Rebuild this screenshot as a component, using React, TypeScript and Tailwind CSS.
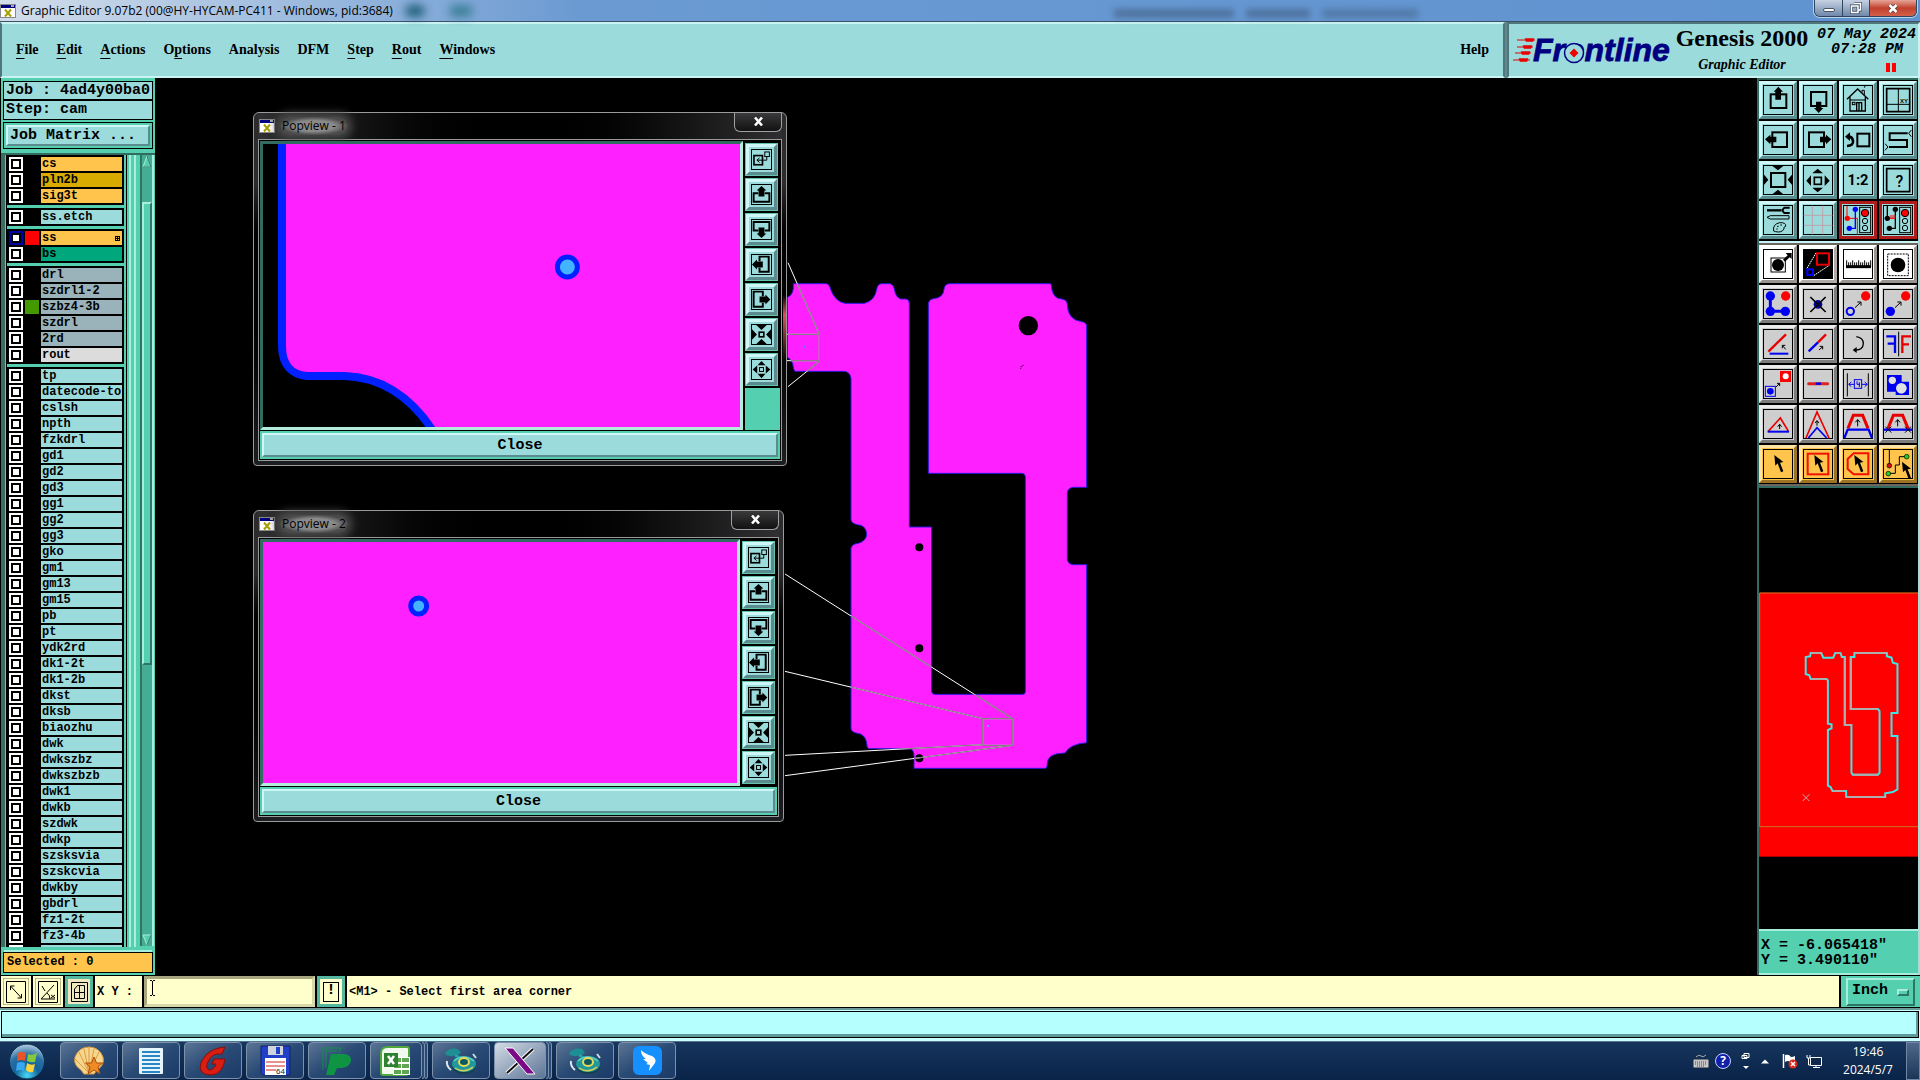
import type { ReactNode } from 'react';

const MONO = 'font-["Liberation_Mono",monospace] font-bold';
const SERIF = 'font-["Liberation_Serif",serif] font-bold';
const SANS = 'font-["Open_Sans",sans-serif]';

const RAISED = 'border-t-[#cff7f7] border-l-[#cff7f7] border-b-[#5a8b8e] border-r-[#5a8b8e]';
const RAISED_TEAL = 'border-t-[#a8eedc] border-l-[#a8eedc] border-b-[#2f7566] border-r-[#2f7566]';

const MENUS: { label: string; key: number }[] = [
  { label: 'File', key: 0 },
  { label: 'Edit', key: 0 },
  { label: 'Actions', key: 0 },
  { label: 'Options', key: 1 },
  { label: 'Analysis', key: -1 },
  { label: 'DFM', key: -1 },
  { label: 'Step', key: 0 },
  { label: 'Rout', key: 0 },
  { label: 'Windows', key: 0 },
];

interface Layer {
  name: string;
  color?: string;
  swatch?: string;
  active?: boolean;
}

const BOARD = 'bg-[#ffc44c]';
const DRILL = 'bg-[#9ab3bb]';

const LAYER_GROUPS: Layer[][] = [
  [
    { name: 'cs', color: BOARD },
    { name: 'pln2b', color: 'bg-[#d9aa00]' },
    { name: 'sig3t', color: BOARD },
  ],
  [{ name: 'ss.etch' }],
  [
    { name: 'ss', color: BOARD, swatch: 'bg-[#ff0000]', active: true },
    { name: 'bs', color: 'bg-[#00a67c]' },
  ],
  [
    { name: 'drl', color: DRILL },
    { name: 'szdrl1-2', color: DRILL },
    { name: 'szbz4-3b', color: DRILL, swatch: 'bg-[#429a00]' },
    { name: 'szdrl', color: DRILL },
    { name: '2rd', color: DRILL },
    { name: 'rout', color: 'bg-[#dcdcdc]' },
  ],
  [
    'tp', 'datecode-to', 'cslsh', 'npth', 'fzkdrl', 'gd1', 'gd2', 'gd3', 'gg1', 'gg2', 'gg3', 'gko',
    'gm1', 'gm13', 'gm15', 'pb', 'pt', 'ydk2rd', 'dk1-2t', 'dk1-2b', 'dkst', 'dksb', 'biaozhu', 'dwk',
    'dwkszbz', 'dwkszbzb', 'dwk1', 'dwkb', 'szdwk', 'dwkp', 'szsksvia', 'szskcvia', 'dwkby', 'gbdrl',
    'fz1-2t', 'fz3-4b', '',
  ].map((name) => ({ name })),
];

const BOARD_PATH =
  'M40 41H140Q150 44 152 58Q165 95 195 100H253Q285 92 290 58Q292 42 305 41H330Q342 44 344 62Q348 82 362 87H378Q388 88 388 100V771H455V1265Q457 1273 465 1273H728Q736 1273 736 1265V620Q735 610 725 610H445V100Q447 88 460 86Q490 84 492 58Q494 42 508 41H812Q815 45 816 60Q822 86 845 87Q862 89 862 105Q864 150 905 155Q920 157 920 170V652H880Q862 654 862 670V868Q864 883 880 884H920V1418Q870 1422 855 1449Q802 1450 802 1480Q802 1495 795 1495H402V1455Q400 1436 388 1436H266Q260 1432 260 1418Q255 1392 232 1390Q213 1386 213 1375V835Q216 822 235 820Q260 812 260 792Q258 765 232 764Q213 760 213 748V325Q210 304 190 304H45Q40 300 38 280Q30 265 22 262V82Q38 76 40 55Z';

const LEADERS =
  'M24 -22L118 193M24 350L118 274M0 193H118V272H0M15 912L698 1346M15 1204L608 1346M15 1456L608 1424M15 1517L698 1426M608 1346H698V1426H608Z';

function AppIcon() {
  return (
    <svg width="16" height="14" viewBox="0 0 16 14" className="shrink-0" aria-hidden="true">
      <rect x="0.5" y="0.5" width="15" height="13" fill="#fff" stroke="#888" />
      <rect x="1" y="1" width="14" height="3" fill="#000080" />
      <rect x="11" y="1" width="3" height="2" fill="#aaa" />
      <path d="M5 5.500l6 7M11 5.500l-6 7" stroke="#a8a000" strokeWidth="2" />
    </svg>
  );
}

function TitleBar() {
  return (
    <header className="flex h-[22px] shrink-0 justify-between border-b border-[#3d5068] bg-linear-to-r from-[#d3deea] via-[#6b9ad2] via-30% to-[#5f93d0]">
      <div className="flex items-center">
        <AppIcon />
        <h1 className={`${SANS} ml-[5px] text-[12px] text-black`}>
          Graphic Editor 9.07b2 (00@HY-HYCAM-PC411 - Windows, pid:3684)
        </h1>
        <div className="ml-3 flex gap-6 blur-[5px]">
          <span className="h-3 w-5 rounded-full bg-[#1f5f78]" />
          <span className="h-3 w-6 rounded-full bg-[#3b7f98]" />
        </div>
      </div>
      <div className="mt-[9px] mr-40 ml-auto flex w-[540px] gap-3 blur-[3px]">
        <span className="h-[9px] w-[120px] bg-[#38506e]/50" />
        <span className="h-[9px] w-16 bg-[#38506e]/50" />
        <span className="h-[9px] w-24 bg-[#38506e]/40" />
      </div>
      <div className="mr-[3px] flex h-[17px] w-[103px] shrink-0 overflow-hidden rounded-b-md border border-t-0 border-[#31465e] shadow-[0_0_0_1px_#b9d2ea]">
        <button aria-label="Minimize" className="flex w-7 items-center justify-center border-r border-[#31465e] bg-linear-to-b from-[#c6d2e2] to-[#7088aa]">
          <span className="mt-1 h-[4px] w-3 rounded-xs border border-[#4a5568] bg-white" />
        </button>
        <button aria-label="Restore" className="flex w-[27px] items-center justify-center border-r border-[#31465e] bg-linear-to-b from-[#c6d2e2] to-[#7088aa]">
          <svg width="12" height="12" viewBox="0 0 12 12">
            <path d="M4 1.500h6.500v6.500h-2.500M1.500 4h6.500v6.500h-6.500z" fill="none" stroke="#445066" strokeWidth="3" />
            <path d="M4 1.500h6.500v6.500h-2.500M1.500 4h6.500v6.500h-6.500z" fill="none" stroke="#fff" strokeWidth="1.500" />
          </svg>
        </button>
        <button aria-label="Close" className="flex grow items-center justify-center bg-linear-to-b from-[#e6a498] via-[#c0402c] via-50% to-[#d4604a]">
          <svg width="10" height="9" viewBox="0 0 10 9">
            <path d="M1.500 1l7 7M8.500 1l-7 7" stroke="#5c4040" strokeWidth="4" />
            <path d="M1.500 1l7 7M8.500 1l-7 7" stroke="#fff" strokeWidth="2.500" />
          </svg>
        </button>
      </div>
    </header>
  );
}

function MenuLabel({ label, index }: { label: string; index: number }) {
  if (index < 0) return <>{label}</>;
  return (
    <>
      {label.slice(0, index)}
      <span className="underline decoration-1 underline-offset-4">{label[index]}</span>
      {label.slice(index + 1)}
    </>
  );
}

function FrontlineLogo() {
  return (
    <svg width="162" height="34" viewBox="0 0 162 34" role="img" aria-label="Frontline">
      <g stroke="#e80000" fill="#e80000">
        <path d="M4 7h18M4 14h16M2 20h16M-1 27h18" strokeWidth="1" />
        <path d="M12 5.500h9l-1 3h-7zM10 12.500h9l-1 3h-7zM8 18.500h9l-1 3h-7zM6 25.500h9l-1 3h-7z" strokeWidth="0.500" />
      </g>
      <text
        x="20"
        y="28"
        fontSize="32"
        fill="#000080"
        stroke="#000080"
        strokeWidth="0.800"
        className="font-['Liberation_Sans',sans-serif] font-bold italic"
      >
        Frontline
      </text>
      <ellipse cx="61" cy="20" rx="9.500" ry="9.500" fill="#9cdbdc" stroke="#000080" strokeWidth="1.500" />
      <path d="M61 15.500l4.500 4.500l-4.500 4.500l-4.500 -4.500z" fill="#f00000" />
    </svg>
  );
}

function MenuBar() {
  return (
    <div className="flex h-14 shrink-0 bg-[#5f8a90]">
      <nav className={`${SERIF} flex grow items-center gap-[18px] border-2 border-t-[#c8f4f4] border-r-[#4f777b] border-b-[#c8f4f4] border-l-[#4f777b] bg-[#9cdbdc] pr-[14px] pb-[2px] pl-[14px] text-[14px] text-black`}>
        {MENUS.map((m) => (
          <button key={m.label}>
            <MenuLabel label={m.label} index={m.key} />
          </button>
        ))}
        <button className="ml-auto">Help</button>
      </nav>
      <div className="ml-[2px] flex w-[413px] shrink-0 border-2 border-t-[#4f777b] border-r-[#c8f4f4] border-b-[#c8f4f4] border-l-[#4f777b] bg-[#9cdbdc] text-black">
        <div className="mt-[9px] ml-1 w-[160px]">
          <FrontlineLogo />
        </div>
        <div className={`${SERIF} flex w-[138px] flex-col items-center whitespace-nowrap`}>
          <span className="text-[24px] leading-7">Genesis 2000</span>
          <span className="mt-[5px] text-[14px] leading-4 italic">Graphic Editor</span>
        </div>
        <div className={`${MONO} mt-[3px] flex grow flex-col items-end pr-[2px] text-[15px] leading-[15px] whitespace-nowrap italic`}>
          <span>07 May 2024</span>
          <span className="mr-[13px]">07:28 PM</span>
          <span className="mt-[6px] mr-5 flex gap-[2px]">
            <span className="h-[9px] w-1 bg-[#ff0000]" />
            <span className="h-[9px] w-1 bg-[#ff0000]" />
          </span>
        </div>
      </div>
    </div>
  );
}

function LayerRow({ layer }: { layer: Layer }) {
  return (
    <label className="flex h-4 items-center gap-[2px]">
      <input
        type="checkbox"
        aria-label={layer.name || 'layer'}
        className={`h-[14px] w-[14px] shrink-0 appearance-none border-2 bg-white shadow-[inset_0_0_0_2px_#000] ${layer.active ? 'border-[#0000a8]' : 'border-white'}`}
      />
      <span className={`h-[14px] w-[14px] shrink-0 ${layer.swatch ?? 'bg-black'}`} />
      <span className={`flex h-[14px] w-[81px] items-center overflow-hidden pl-px text-[12px] leading-[14px] ${layer.color ?? 'bg-[#9cdbdc]'}`}>
        {layer.name}
        {layer.active && (
          <svg width="5" height="5" viewBox="0 0 5 5" className="mr-[2px] ml-auto" aria-hidden="true">
            <path d="M0 .5h5M0 2.500h5M0 4.500h5M.5 0v5M2.500 0v5M4.500 0v5" stroke="#000" />
          </svg>
        )}
      </span>
    </label>
  );
}

function Sidebar() {
  return (
    <aside className={`${MONO} flex w-[155px] shrink-0 flex-col border-l border-black bg-[#54cfb0] pt-[3px] text-[15px] text-black`}>
      <div className="mr-[2px] ml-[2px] leading-[18px] whitespace-pre">
        <div className="h-[19px] border border-black bg-[#9cdbdc] px-[2px]">Job : 4ad4y00ba0</div>
        <div className="h-5 border border-black bg-[#9cdbdc] px-[2px]">Step: cam</div>
        <div className="mt-[2px] border border-black p-[2px]">
          <button className={`block h-[21px] w-full border-2 bg-[#9cdbdc] pl-[2px] text-left leading-[17px] ${RAISED}`}>Job Matrix ...</button>
        </div>
      </div>
      <div className="mt-[4px] flex min-h-0 grow border-t-2 border-[#336b60]">
        <div className="w-[4px] shrink-0 bg-[#3b6d62]" />
        <div className="ml-px flex min-h-0 w-[121px] flex-col gap-[3px] overflow-hidden border-x border-black pr-[2px]">
          {LAYER_GROUPS.map((group) => (
            <div key={group[0].name} className="shrink-0 bg-black py-px pl-[2px]">
              {group.map((layer) => (
                <LayerRow key={layer.name} layer={layer} />
              ))}
            </div>
          ))}
        </div>
        <div className="ml-[2px] w-[2px] bg-[#a8eedc]" />
        <div className="ml-[3px] w-[2px] bg-[#a8eedc]" />
        <div className="mb-px ml-[4px] flex w-[14px] flex-col items-center border-x-2 border-r-[#a8eedc] border-l-[#2f7566] bg-[#44ad94]">
          <svg width="10" height="13" viewBox="0 0 10 13" className="mb-[34px] shrink-0">
            <path d="M5 1l4 11h-8z" fill="#54cfb0" stroke="#a8eedc" />
            <path d="M5 1l4 11h-8" fill="none" stroke="#2f7566" />
          </svg>
          <div className={`h-[463px] w-[10px] border-2 bg-[#54cfb0] ${RAISED_TEAL}`} />
          <svg width="10" height="12" viewBox="0 0 10 12" className="mt-auto shrink-0">
            <path d="M1 1h8l-4 10z" fill="#54cfb0" stroke="#a8eedc" />
            <path d="M9 1l-4 10" stroke="#2f7566" />
          </svg>
        </div>
      </div>
      <div className="mx-[2px] mt-[5px] mb-[2px] h-[21px] border border-black bg-[#ffc44c] pl-[3px] text-[12px] leading-[18px] whitespace-pre shadow-[0_-3px_0_-1px_#a8eedc]">
        Selected : 0
      </div>
    </aside>
  );
}

// Icons below are drawn on a grid of three units to the pixel.
function UpArrow() {
  return (
    <>
      <rect x="35" y="40" width="47" height="41" fill="none" stroke="#000" strokeWidth="6" />
      <path d="M58 17l14 15h-6v24h-17v-24h-5z" />
    </>
  );
}

function Cursor({ at }: { at?: string }) {
  return <path transform={at} d="M46 30l3 32l7 -7l10 27l7 -3l-10 -26l10 -2z" />;
}

const TRAFFIC = (
  <g fill="none" stroke="#000" strokeWidth="3">
    <rect x="62" y="19" width="33" height="76" />
    <circle cx="78" cy="36" r="11" fill="#f00" />
    <circle cx="78" cy="60" r="8" />
    <circle cx="78" cy="81" r="8" />
  </g>
);

const VIEW_TOOLS: { name: string; alert?: boolean; art: ReactNode }[] = [
  { name: 'Pan up', art: <UpArrow /> },
  {
    name: 'Pan down',
    art: (
      <>
        <rect x="36" y="33" width="46" height="42" fill="none" stroke="#000" strokeWidth="6" />
        <path d="M59 96l14 -15h-6v-19h-16v19h-6z" />
      </>
    ),
  },
  {
    name: 'Home',
    art: (
      <g fill="none" stroke="#000" strokeWidth="4">
        <path d="M24 55L56 24L88 55M33 49V90H79V49M53 90V65H68V90M60 66V90" />
        <path d="M69 35V28H76V42M76 20l3 -7M33 57H79" strokeWidth="3" />
        <rect x="40" y="64" width="8" height="7" strokeWidth="3" />
      </g>
    ),
  },
  {
    name: 'Panes',
    art: (
      <>
        <path d="M23 23H92V92H23Z" fill="none" stroke="#000" strokeWidth="5" />
        <path d="M58 23V92M23 70H92" stroke="#000" strokeWidth="3" />
        <text x="63" y="66" fontSize="18" className="font-['Liberation_Sans',sans-serif] font-bold">
          XY
        </text>
      </>
    ),
  },
  {
    name: 'Pan left',
    art: (
      <>
        <rect x="40" y="34" width="44" height="44" fill="none" stroke="#000" strokeWidth="6" />
        <path d="M18 55l16 -14v6h18v17h-18v6z" />
      </>
    ),
  },
  {
    name: 'Pan right',
    art: (
      <>
        <rect x="30" y="34" width="45" height="44" fill="none" stroke="#000" strokeWidth="6" />
        <path d="M97 55l-16 -14v6h-18v17h18v6z" />
      </>
    ),
  },
  {
    name: 'Previous view',
    art: (
      <>
        <rect x="55" y="38" width="36" height="38" fill="none" stroke="#000" strokeWidth="6" />
        <path d="M24 75Q44 74 42 60Q40 47 28 47" fill="none" stroke="#000" strokeWidth="8" />
        <path d="M18 47l15 -13v26z" />
      </>
    ),
  },
  {
    name: 'Serpentine',
    art: (
      <g fill="none" stroke="#000">
        <path d="M86 37H32V57H84V78H30" strokeWidth="6" />
        <path d="M97 27l-8 10l8 10M18 68l9 10l-9 10" strokeWidth="3" />
      </g>
    ),
  },
  {
    name: 'Zoom in',
    art: (
      <>
        <rect x="36" y="36" width="43" height="42" fill="none" stroke="#000" strokeWidth="6" />
        <path d="M40 15H73L57 28ZM40 100H73L57 86ZM14 40V73L28 56ZM100 40V73L86 56Z" />
      </>
    ),
  },
  {
    name: 'Zoom out',
    art: (
      <>
        <rect x="46" y="49" width="21" height="21" fill="none" stroke="#000" strokeWidth="5" />
        <path d="M40 37H72L56 23ZM40 80H72L56 94ZM36 43V75L22 59ZM77 43V75L92 59Z" />
      </>
    ),
  },
  {
    name: 'Zoom 1:2',
    art: (
      <text x="57" y="73" fontSize="44" textAnchor="middle" className="font-['Roboto',sans-serif] font-bold">
        1:2
      </text>
    ),
  },
  {
    name: 'Help',
    art: (
      <>
        <path d="M23 23H92V92H23Z" fill="none" stroke="#000" strokeWidth="5" />
        <text x="61" y="78" fontSize="48" textAnchor="middle" className="font-['Roboto',sans-serif] font-medium">
          ?
        </text>
      </>
    ),
  },
  {
    name: 'Setup',
    art: (
      <g fill="none" stroke="#000">
        <path d="M24 28H68" strokeWidth="7" />
        <path d="M92 20H76Q66 28 76 36H92" strokeWidth="6" />
        <path d="M24 49l10 -5H90V54H34Z" strokeWidth="3" />
        <path d="M44 90Q40 70 62 65Q82 64 80 76Q72 78 75 84Q68 96 50 92ZM54 76h5M64 72h5M52 84h4" strokeWidth="3" />
      </g>
    ),
  },
  {
    name: 'Grid',
    art: <path d="M40 14V100M71 14V100M14 43H100M14 73H100" stroke="#bfa3ac" strokeWidth="3" />,
  },
  {
    name: 'Snap',
    alert: true,
    art: (
      <>
        <path d="M24 15V52H55V101" fill="none" stroke="#f00" strokeWidth="3" />
        <path d="M49 25V82H31" fill="none" stroke="#00f" strokeWidth="4" />
        <circle cx="25" cy="52" r="8" fill="#f00" />
        <circle cx="49" cy="25" r="8" fill="#00f" />
        <circle cx="31" cy="82" r="8" fill="#00f" />
        {TRAFFIC}
      </>
    ),
  },
  {
    name: 'Check',
    alert: true,
    art: (
      <>
        <path d="M25 15V52M49 25V82H31" fill="none" stroke="#000" strokeWidth="4" />
        <path d="M30 52H48M36 42V52M42 42V52M48 42V52" stroke="#f00" strokeWidth="3" />
        <circle cx="25" cy="52" r="8" />
        <circle cx="49" cy="25" r="8" />
        <circle cx="31" cy="82" r="8" />
        {TRAFFIC}
      </>
    ),
  },
];

type Tone = 'white' | 'black' | 'gray' | 'amber';

const TONES: Record<Tone, string> = {
  white: 'bg-white border-t-[#ffffff] border-l-[#ffffff] border-b-[#9a9490] border-r-[#9a9490]',
  black: 'bg-white border-t-[#ffffff] border-l-[#ffffff] border-b-[#b0aaa8] border-r-[#b0aaa8]',
  gray: 'bg-[#cecece] border-t-[#ececec] border-l-[#ececec] border-b-[#7d7d7d] border-r-[#7d7d7d]',
  amber: 'bg-[#ffc44c] border-t-[#ffe2a6] border-l-[#ffe2a6] border-b-[#9d7425] border-r-[#9d7425]',
};

const EDIT_TOOLS: { name: string; tone: Tone; art: ReactNode }[] = [
  {
    name: 'Select feature',
    tone: 'white',
    art: (
      <>
        <rect x="36" y="39" width="43" height="42" fill="none" stroke="#000" strokeWidth="3" />
        <circle cx="57" cy="60" r="18" />
        <path d="M72 44l14 -13l-6 -7h18v18l-6 -5l-14 13z" />
      </>
    ),
  },
  {
    name: 'Popview',
    tone: 'black',
    art: (
      <>
        <rect x="14" y="14" width="86" height="86" />
        <path d="M24 70L52 22M44 92L92 60" stroke="#fff" strokeWidth="3" strokeDasharray="5 2" />
        <rect x="54" y="25" width="36" height="34" fill="none" stroke="#e80000" strokeWidth="6" />
        <rect x="25" y="73" width="17" height="17" fill="none" stroke="#00f" strokeWidth="6" />
      </>
    ),
  },
  {
    name: 'Measure',
    tone: 'white',
    art: (
      <>
        <path d="M21 65H96" stroke="#000" strokeWidth="9" />
        <path
          d="M23 46V66M29 52V66M35 52V66M41 46V66M47 52V66M53 52V66M59 46V66M65 52V66M71 52V66M77 46V66M83 52V66M89 52V66M95 46V66"
          stroke="#000"
          strokeWidth="3"
        />
      </>
    ),
  },
  {
    name: 'Area',
    tone: 'white',
    art: (
      <>
        <rect x="26" y="27" width="62" height="65" fill="none" stroke="#000" strokeWidth="3" strokeDasharray="6 3" />
        <circle cx="57" cy="60" r="22" />
      </>
    ),
  },
  {
    name: 'Net',
    tone: 'gray',
    art: (
      <g fill="#0000f0">
        <path d="M34 33V79H79" fill="none" stroke="#0000f0" strokeWidth="9" />
        <circle cx="34" cy="33" r="14" />
        <circle cx="34" cy="79" r="14" />
        <circle cx="79" cy="79" r="14" />
        <circle cx="80" cy="33" r="14" fill="#f00" />
      </g>
    ),
  },
  {
    name: 'Delete',
    tone: 'gray',
    art: (
      <>
        <circle cx="57" cy="58" r="13" fill="#0000a0" />
        <path d="M34 36L80 81M80 36L34 81" stroke="#000" strokeWidth="5" />
      </>
    ),
  },
  {
    name: 'Move',
    tone: 'gray',
    art: (
      <>
        <circle cx="34" cy="79" r="11" fill="none" stroke="#0000f0" strokeWidth="6" />
        <circle cx="80" cy="33" r="14" fill="#f00" />
        <path d="M48 68L65 52M55 51H66V62" fill="none" stroke="#000" strokeWidth="3" />
      </>
    ),
  },
  {
    name: 'Copy',
    tone: 'gray',
    art: (
      <>
        <circle cx="34" cy="79" r="14" fill="#0000f0" />
        <circle cx="80" cy="33" r="14" fill="#f00" />
        <path d="M48 68L65 52M55 51H66V62" fill="none" stroke="#000" strokeWidth="3" />
      </>
    ),
  },
  {
    name: 'Rotate line',
    tone: 'gray',
    art: (
      <>
        <path d="M28 80L81 28" stroke="#e80000" strokeWidth="7" />
        <path d="M32 86H88" stroke="#0000f0" strokeWidth="6" />
        <path d="M80 73L70 61M79 61H70V70" fill="none" stroke="#000" strokeWidth="3" />
      </>
    ),
  },
  {
    name: 'Extend line',
    tone: 'gray',
    art: (
      <>
        <path d="M81 28L57 52" stroke="#e80000" strokeWidth="7" />
        <path d="M57 52L29 79" stroke="#0000f0" strokeWidth="7" />
        <path d="M60 75L71 65M62 64H71V73" fill="none" stroke="#000" strokeWidth="3" />
      </>
    ),
  },
  {
    name: 'Rotate',
    tone: 'gray',
    art: (
      <>
        <path d="M52 35Q73 38 73 56Q72 74 50 75" fill="none" stroke="#000" strokeWidth="4" />
        <path d="M41 75l12 -9v18z" />
      </>
    ),
  },
  {
    name: 'Mirror',
    tone: 'gray',
    art: (
      <g fill="none" strokeWidth="7">
        <path d="M22 34H48V84M26 56H48" stroke="#0000f0" />
        <path d="M96 34H70V84M70 58H90" stroke="#e80000" />
        <path d="M59 20V94" stroke="#000" strokeWidth="3" />
      </g>
    ),
  },
  {
    name: 'Replace',
    tone: 'gray',
    art: (
      <>
        <rect x="63" y="18" width="33" height="33" fill="#f00" />
        <circle cx="80" cy="34" r="9" fill="#fff" />
        <rect x="19" y="64" width="30" height="30" fill="none" stroke="#0000f0" strokeWidth="3" />
        <circle cx="34" cy="79" r="10" fill="#0000f0" />
        <path d="M51 66L62 55M54 55H62V63" fill="none" stroke="#000" strokeWidth="3" />
      </>
    ),
  },
  {
    name: 'Break line',
    tone: 'gray',
    art: (
      <>
        <path d="M29 56H86" stroke="#e02020" strokeWidth="9" strokeLinecap="round" />
        <path d="M50 56H66" stroke="#0000f0" strokeWidth="7" />
      </>
    ),
  },
  {
    name: 'Spacing',
    tone: 'gray',
    art: (
      <>
        <path d="M25 25V94M88 25V94" stroke="#000" strokeWidth="3" />
        <g fill="none" stroke="#0000f0" strokeWidth="3">
          <rect x="46" y="44" width="22" height="26" />
          <path d="M30 58H46M37 51l-8 7l8 7M68 58H84M77 51l8 7l-8 7M54 49V58H63M61 52V66" />
        </g>
      </>
    ),
  },
  {
    name: 'Merge',
    tone: 'gray',
    art: (
      <>
        <path d="M24 30H68V50H90V90H50V80H24Z" fill="#0000f0" />
        <circle cx="40" cy="46" r="11" fill="#e0e0e0" />
        <circle cx="67" cy="70" r="16" fill="#e0e0e0" />
      </>
    ),
  },
  {
    name: 'Triangle',
    tone: 'gray',
    art: (
      <>
        <path d="M27 80L64 39L89 80" fill="none" stroke="#e80000" strokeWidth="5" />
        <path d="M26 80H90" stroke="#0000f0" strokeWidth="6" />
        <path d="M62 72V58M56 65L62 58L68 65" fill="none" stroke="#000" strokeWidth="3" />
      </>
    ),
  },
  {
    name: 'Chevron',
    tone: 'gray',
    art: (
      <>
        <path d="M21 99L54 21L90 99" fill="none" stroke="#e80000" strokeWidth="5" />
        <path d="M28 99L54 68L83 99" fill="none" stroke="#0000f0" strokeWidth="5" />
        <path d="M54 62V47M48 54L54 47L60 54" fill="none" stroke="#000" strokeWidth="3" />
      </>
    ),
  },
  {
    name: 'Trapezoid',
    tone: 'gray',
    art: (
      <>
        <path d="M27 70L43 31H71L87 70" fill="none" stroke="#e80000" strokeWidth="9" />
        <path d="M16 99L26 74H89L99 99" fill="none" stroke="#0000f0" strokeWidth="7" />
        <path d="M56 64V44M49 52L56 44L63 52" fill="none" stroke="#000" strokeWidth="3" />
      </>
    ),
  },
  {
    name: 'Trapezoid cut',
    tone: 'gray',
    art: (
      <>
        <path d="M27 70L43 31H71L87 70" fill="none" stroke="#e80000" strokeWidth="9" />
        <path d="M14 74H100" stroke="#0000f0" strokeWidth="7" />
        <path d="M56 64V44M49 52L56 44L63 52M19 65l18 18M37 65l-18 18M78 65l18 18M96 65l-18 18" fill="none" stroke="#000" strokeWidth="3" />
      </>
    ),
  },
  { name: 'Select', tone: 'amber', art: <Cursor /> },
  {
    name: 'Select in rectangle',
    tone: 'amber',
    art: (
      <>
        <rect x="26" y="26" width="62" height="62" fill="none" stroke="#f01000" strokeWidth="6" />
        <Cursor />
      </>
    ),
  },
  {
    name: 'Select in polygon',
    tone: 'amber',
    art: (
      <>
        <path d="M44 25H88V88H44L26 72V42Z" fill="none" stroke="#f01000" strokeWidth="6" />
        <Cursor />
      </>
    ),
  },
  {
    name: 'Select net',
    tone: 'amber',
    art: (
      <>
        <path d="M31 14V58M30 85H49V60H61V35H80" fill="none" stroke="#000" strokeWidth="3" />
        <g stroke="#000" strokeWidth="2">
          <circle cx="31" cy="62" r="7" fill="#d01010" />
          <circle cx="28" cy="86" r="7" fill="#20d020" />
          <circle cx="83" cy="35" r="7" fill="#20d020" />
        </g>
        <Cursor at="translate(23 20)" />
      </>
    ),
  },
];

function ToolArt({ children }: { children: ReactNode }) {
  return (
    <svg width="38" height="38" viewBox="0 0 114 114" className="-m-[3px] shrink-0" aria-hidden="true">
      <rect x="13.500" y="13.500" width="87" height="87" fill="none" stroke="#000" strokeWidth="3" />
      {children}
    </svg>
  );
}

function MiniMap() {
  return (
    <svg width="100%" height="340" viewBox="24 24 480 1020" preserveAspectRatio="none" aria-hidden="true">
      <rect x="24" y="35" width="482" height="792" fill="#f00" />
      <path d="M26 737V36H506M26 737H506" fill="none" stroke="#c8741c" strokeWidth="3" />
      <path
        d="M180 216H212L218 230H248L254 216H270L274 228H283V432H303V575L307 581H383L388 575V390L383 384H301V228H312V216H410V226L424 230L428 245L442 249V396H424V465H442V625L428 633L405 637V648H287V630H246L240 618L232 614V447L243 442V430L232 428V298L228 294H180L176 283L165 279V228L178 226Z"
        fill="none"
        stroke="#3fe6e6"
        strokeWidth="6"
      />
      <path
        d="M180 216H212M254 216H270M283 228V432H303M307 581H383M383 384H301V228M312 216H410M405 648H287M282 630H246M228 294H180"
        fill="none"
        stroke="#adadad"
        strokeWidth="6"
      />
      <path d="M156 640l20 20M176 640l-20 20" stroke="#c8b0b0" strokeWidth="3" />
    </svg>
  );
}

function RightPanel() {
  return (
    <aside className="flex w-[163px] shrink-0 flex-col border-x-2 border-r-[#a8dcd4] border-l-[#336b60] bg-black text-black">
      <div className="grid grid-cols-[repeat(4,38px)] gap-[2px] border-t-2 border-[#336b60] pt-px">
        {VIEW_TOOLS.map((tool) => (
          <button
            key={tool.name}
            aria-label={tool.name}
            className={`flex h-[38px] items-center justify-center border-3 bg-[#9cdbdc] ${tool.alert ? 'border-[#b01c1c]' : RAISED}`}
          >
            <ToolArt>{tool.art}</ToolArt>
          </button>
        ))}
      </div>
      <div className="mt-[2px] h-[2px] bg-[#c8f4f4]" />
      <div className="grid grid-cols-[repeat(4,38px)] gap-[2px] border-t-2 border-[#6b6560] pb-px">
        {EDIT_TOOLS.map((tool) => (
          <button
            key={tool.name}
            aria-label={tool.name}
            className={`flex h-[38px] items-center justify-center border-3 ${TONES[tool.tone]}`}
          >
            <ToolArt>{tool.art}</ToolArt>
          </button>
        ))}
      </div>
      <div className="h-[2px] bg-[#6b6560]" />
      <div className="h-[2px] bg-[#336b60]" />
      <div className="flex grow flex-col justify-end">
        <MiniMap />
      </div>
      <div className={`${MONO} h-[46px] shrink-0 border-t-2 border-b-2 border-t-[#a8eedc] border-b-[#a8eedc] bg-[#54cfb0] pt-[7px] pl-[2px] text-[15px] leading-[15px] whitespace-pre`}>
        <div>X = -6.065418"</div>
        <div>Y = 3.490110"</div>
      </div>
    </aside>
  );
}

const POP_TOOLS: { name: string; art: ReactNode }[] = [
  {
    name: 'Pick area',
    art: (
      <g fill="none" stroke="#000">
        <rect x="9" y="20" width="26" height="28" strokeWidth="5" />
        <rect x="42" y="9" width="14" height="14" strokeWidth="3" />
        <path d="M48 23V34H18M26 27l-8 7l8 7" strokeWidth="3" />
      </g>
    ),
  },
  {
    name: 'Up',
    art: (
      <>
        <path d="M22 28H8V54H56V28H42" fill="none" stroke="#000" strokeWidth="6" />
        <path d="M32 6l15 14h-6v18h-18v-18h-6z" />
      </>
    ),
  },
  {
    name: 'Down',
    art: (
      <>
        <path d="M22 35H8V9H56V35H42" fill="none" stroke="#000" strokeWidth="6" />
        <path d="M32 58l15 -14h-6v-18h-18v18h-6z" />
      </>
    ),
  },
  {
    name: 'Left',
    art: (
      <>
        <path d="M26 22V8H54V54H26V42" fill="none" stroke="#000" strokeWidth="6" />
        <path d="M3 32l15 -15v6h18v18h-18v6z" />
      </>
    ),
  },
  {
    name: 'Right',
    art: (
      <>
        <path d="M36 22V8H8V54H36V42" fill="none" stroke="#000" strokeWidth="6" />
        <path d="M59 32l-15 -15v6h-18v18h18v6z" />
      </>
    ),
  },
  {
    name: 'In',
    art: (
      <>
        <rect x="25" y="25" width="14" height="14" fill="none" stroke="#000" strokeWidth="5" />
        <path d="M16 3H48L32 18ZM16 61H48L32 46ZM3 16V48L18 32ZM61 16V48L46 32Z" />
      </>
    ),
  },
  {
    name: 'Out',
    art: (
      <>
        <rect x="26" y="26" width="12" height="12" fill="none" stroke="#000" strokeWidth="3" />
        <path d="M20 19H44L32 6ZM20 45H44L32 59ZM19 20V44L5 32ZM45 20V44L59 32Z" />
      </>
    ),
  },
];

interface PopviewProps {
  title: string;
  place: string;
  view: string;
  filler?: boolean;
  children: ReactNode;
}

function Popview({ title, place, view, filler, children }: PopviewProps) {
  return (
    <section className={`absolute rounded-t-md rounded-b-sm border border-[#9a9a9a] bg-linear-to-b from-[#2c2c2e] from-20% via-black via-40% to-[#1c1e22] px-[4px] pb-[4px] ${place}`}>
      {filler && (
        <div className="absolute top-[182px] right-0 h-[66px] w-[3px] bg-linear-to-b from-transparent via-[#e05058] via-30% to-transparent" />
      )}
      <div className="flex h-[26px] items-start justify-between bg-linear-to-r from-[#303032] via-black via-50% to-[#303032]">
        <div className={`${SANS} flex items-center gap-[5px] pt-[4px] pl-px text-[12px] leading-[18px] text-black`}>
          <AppIcon />
          <span className="rounded-full bg-[radial-gradient(closest-side,#8a8a8a_60%,#4a4a4a)] px-[2px] shadow-[0_0_8px_4px_#4a4a4a]">{title}</span>
        </div>
        <button aria-label="Close window" className="flex h-[19px] w-[48px] items-center justify-center rounded-b-md border border-t-0 border-[#a0a0a0] bg-linear-to-b from-[#3a3a3c] to-[#121212] pb-[2px]">
          <svg width="11" height="9" viewBox="0 0 11 9">
            <path d="M2 0.500l7 8M9 0.500l-7 8" stroke="#fff" strokeWidth="2.500" />
          </svg>
        </button>
      </div>
      <div className="border border-[#9a9a9a] bg-black p-px text-black">
        <div className="flex gap-px">
          <div className={`min-w-0 grow border-3 border-t-[#336b60] border-r-[#b4ecdc] border-b-[#b4ecdc] border-l-[#336b60] ${view}`}>
            {children}
          </div>
          <div className="flex w-[36px] shrink-0 flex-col gap-[2px] pt-[2px] pl-px">
            {POP_TOOLS.map((tool) => (
              <button key={tool.name} aria-label={tool.name} className="h-[33px] w-[33px] shrink-0 bg-[#62c4ac] p-px">
                <span className={`flex h-full items-center justify-center border-3 bg-[#9cdbdc] ${RAISED}`}>
                  <svg width="21" height="21" viewBox="0 0 64 64" aria-hidden="true">
                    <rect x="1.500" y="1.500" width="61" height="61" fill="none" stroke="#000" strokeWidth="3" />
                    {tool.art}
                  </svg>
                </span>
              </button>
            ))}
            {filler && <div className="grow bg-[#54cfb0]" />}
          </div>
        </div>
        <div className="mt-px bg-[#54cfb0] p-[2px]">
          <button className={`${MONO} block h-6 w-full border-2 bg-[#9cdbdc] text-[15px] leading-[21px] ${RAISED}`}>Close</button>
        </div>
      </div>
    </section>
  );
}

function Workspace() {
  return (
    <main className="relative grow overflow-hidden bg-black">
      <svg width="960" height="760" className="absolute top-0 left-0" aria-hidden="true">
        <defs>
          <clipPath id="board">
            <path d={BOARD_PATH} />
          </clipPath>
        </defs>
        <g transform="translate(625 192) scale(.33333)">
          <path d={BOARD_PATH} fill="#ff20ff" stroke="#2a18e0" strokeWidth="3" />
          <circle cx="745" cy="167" r="29" />
          <circle cx="418" cy="832" r="12" />
          <circle cx="418" cy="1135" r="12" />
          <circle cx="418" cy="1465" r="12" />
          <path d="M722 296l2 -8l8 -2" fill="none" stroke="#000" strokeWidth="3" strokeDasharray="3 3" />
          <path d={LEADERS} fill="none" stroke="#fff" strokeWidth="3" />
          <path d={LEADERS} clipPath="url(#board)" fill="none" stroke="#8a7a8a" strokeWidth="4" />
          <rect x="69" y="227" width="6" height="6" fill="#6a70ff" />
          <rect x="621" y="1365" width="6" height="6" fill="#8a90ff" />
        </g>
      </svg>
      <Popview title="Popview - 1" place="top-[34px] left-[98px] w-[534px]" view="h-[289px]" filler>
        <svg width="100%" height="100%" viewBox="0 0 478 283" preserveAspectRatio="none" className="block bg-[#ff20ff]">
          <path d="M0 0H19V202C19 222 30 231 44 232H82C115 233 147 250 170 285H0Z" />
          <path d="M19 -2V202C19 222 30 231 44 232H82C115 233 147 250 171 288" fill="none" stroke="#0020ff" strokeWidth="8" />
          <circle cx="305" cy="123" r="10" fill="#42b4ff" stroke="#0020ff" strokeWidth="5" />
        </svg>
      </Popview>
      <Popview title="Popview - 2" place="top-[432px] left-[98px] w-[531px]" view="h-[247px]">
        <svg width="100%" height="100%" viewBox="0 0 475 241" preserveAspectRatio="none" className="block bg-[#ff20ff]">
          <circle cx="156" cy="64" r="8" fill="#42b4ff" stroke="#0020ff" strokeWidth="5" />
        </svg>
      </Popview>
    </main>
  );
}

function CommandBar() {
  const pad = 'flex h-[31px] w-[30px] items-center justify-center border-2 border-[#ffffcc] bg-[#ffffcc] shadow-[inset_0_0_0_1px_#b8b88c]';
  return (
    <div className={`${MONO} flex h-[33px] shrink-0 gap-[2px] border-y border-black bg-black pl-px text-[12px] text-black`}>
      <button aria-label="Absolute" className={pad}>
        <svg width="20" height="22" viewBox="0 0 20 22" fill="none" stroke="#000">
          <path d="M.5 .5h19v21h-19zM4.500 5l11 12M4.500 9V5h4M15.500 13v4h-4" />
        </svg>
      </button>
      <button aria-label="Angle" className={pad}>
        <svg width="20" height="22" viewBox="0 0 20 22" fill="none" stroke="#000">
          <path d="M.5 .5h19v21h-19zM3 18L16 4M3 18h14M4 5l3 5M9 12q3 2 3 6M13 14l4 3M17 14l-4 3" />
        </svg>
      </button>
      <button aria-label="Grid" className="flex w-7 items-center justify-center border-3 border-[#54b89f] bg-[#f0e8c0]">
        <svg width="17" height="20" viewBox="0 0 17 20" fill="none" stroke="#000">
          <path d="M.5 .5h16v19h-16zM3.500 16.500V7l3 -3.500h7v13zM8.500 3.500v13M3.500 10.500h10" />
        </svg>
      </button>
      <label htmlFor="xy" className="flex w-[47px] items-center bg-[#ffffcc] pl-[2px] whitespace-pre">
        X Y :
      </label>
      <div className="relative flex w-[171px]">
        <input
          id="xy"
          defaultValue=""
          className="w-full border-3 border-t-[#a8a880] border-r-[#d8d8a8] border-b-[#d8d8a8] border-l-[#a8a880] bg-[#ffffcc] px-1 outline-none"
        />
        <svg width="7" height="16" viewBox="0 0 7 16" fill="none" stroke="#000" className="pointer-events-none absolute top-1 left-[5px]" aria-hidden="true">
          <path d="M1 .5h2M4 .5h2M3.500 1v14M1 15.500h2M4 15.500h2" />
        </svg>
      </div>
      <button aria-label="Alert" className="flex w-7 items-center justify-center border-3 border-[#54b89f] bg-[#ffffcc]">
        <span className="flex h-5 w-4 items-center justify-center border border-black text-[15px]">!</span>
      </button>
      <output className="flex grow items-center bg-[#ffffcc] pl-[2px]">&lt;M1&gt; - Select first area corner</output>
      <div className="flex w-[79px] shrink-0 items-center bg-[#54cfb0] px-[5px]">
        <div className={`relative w-full border-2 ${RAISED_TEAL}`}>
          <select aria-label="Units" className="block h-6 w-full appearance-none bg-[#54cfb0] pl-1 text-[15px] text-black">
            <option>Inch</option>
          </select>
          <span className={`pointer-events-none absolute top-[9px] right-1 h-[7px] w-3 border-2 bg-[#54cfb0] ${RAISED_TEAL}`} />
        </div>
      </div>
    </div>
  );
}

function GenesisIcon() {
  return (
    <svg width="34" height="30" viewBox="0 0 34 30">
      <path d="M1 7q5 -6 13 -4l3 4q-8 5 -15 2z" fill="#1d8f94" />
      <path d="M11 9l5 3" stroke="#25a0a5" strokeWidth="3" />
      <path d="M3 15q-1 5 4 9" fill="none" stroke="#dfe8ee" strokeWidth="2" />
      <ellipse cx="20" cy="20" rx="12" ry="8" fill="#123f4c" />
      <ellipse cx="20" cy="18" rx="12" ry="8" fill="#23989c" />
      <path d="M10 15q9 -8 20 0" fill="none" stroke="#5fd0c8" strokeWidth="1.500" />
      <ellipse cx="20" cy="16" rx="5" ry="4" fill="#0f5a60" stroke="#e6dc55" strokeWidth="2" />
      <path d="M11 22q9 6 18 -1" fill="none" stroke="#d8d050" strokeWidth="1.500" />
      <path d="M29 8l3 4" stroke="#cfd8e0" strokeWidth="2" />
    </svg>
  );
}

const TASKS: { name: string; active?: boolean; stacked?: boolean; art: ReactNode }[] = [
  {
    name: 'Shell',
    art: (
      <svg width="32" height="30" viewBox="0 0 32 30">
        <path d="M16 1q10 0 14 10q2 8 -6 13l-3 4h-10l-3 -4q-8 -5 -6 -13q4 -10 14 -10z" fill="#f6d58e" stroke="#d99a3c" />
        <path d="M16 27L6 6M16 27L11 3M16 27V2M16 27L21 3M16 27L26 6M16 27L2 13" stroke="#dd9b3e" />
        <path d="M21 11l2.500 6h6l-4.500 4l2 7l-6 -4l-6 4l2 -7l-4.500 -4h6z" fill="#f08a24" stroke="#a8500c" />
      </svg>
    ),
  },
  {
    name: 'Notepad',
    art: (
      <svg width="26" height="28" viewBox="0 0 26 28">
        <rect x="1" y="1" width="24" height="26" rx="1" fill="#e6f4fc" />
        <path d="M4 5h18M4 9h18M4 13h18M4 17h18M4 21h18M4 25h18" stroke="#2a86c4" strokeWidth="2" />
      </svg>
    ),
  },
  {
    name: 'G',
    art: (
      <svg width="28" height="30" viewBox="0 0 28 30">
        <path
          d="M26 1Q14 2 7 9Q-1 18 2 25Q5 29 12 29Q24 28 26 13H15L13 18H17Q15 24 10 24Q6 22 9 16Q12 9 18 8H23Z"
          fill="#d81e12"
          stroke="#8a0d08"
        />
      </svg>
    ),
  },
  {
    name: 'Disk',
    art: (
      <svg width="31" height="31" viewBox="0 0 31 31">
        <path d="M1 1h29v29h-27l-2 -2z" fill="#2040c8" stroke="#101f70" />
        <rect x="8" y="1" width="15" height="9" fill="#d0d4dc" />
        <rect x="16" y="2" width="4" height="7" fill="#2040c8" />
        <rect x="5" y="13" width="21" height="17" fill="#fff" />
        <path d="M6 17h19M6 21h19M6 25h10" stroke="#d02020" />
        <text x="16" y="29" fontSize="8" fill="#222" className="font-['Liberation_Sans',sans-serif]">
          64
        </text>
      </svg>
    ),
  },
  {
    name: 'P',
    art: (
      <svg width="30" height="30" viewBox="0 0 30 30">
        <path d="M9 8H22Q30 9 29 15Q27 22 19 22H15L12 29H4Z" fill="#0f9444" />
        <path d="M1 24V2H19L17 7M4 22V5H15" fill="none" stroke="#0f9444" />
      </svg>
    ),
  },
  {
    name: 'Excel',
    stacked: true,
    art: (
      <svg width="32" height="30" viewBox="0 0 32 30">
        <path d="M8 1h19q2 0 2 2v22q0 4 -4 4h-22q-2 0 -2 -2v-20q0 -6 7 -6z" fill="#f2faf0" stroke="#4fa83c" strokeWidth="2" />
        <path d="M13 11h17v18h-17z" fill="#fff" />
        <path d="M14 12h7v4h-7zM22 12h7v4h-7zM14 18h7v4h-7zM22 18h7v4h-7zM14 24h7v4h-7zM22 24h7v4h-7z" fill="#5fa653" />
        <rect x="4" y="7" width="14" height="14" fill="#2f8132" />
        <path d="M8 10l6 8M14 10l-6 8" stroke="#fff" strokeWidth="2.500" />
      </svg>
    ),
  },
  { name: 'Genesis', art: <GenesisIcon /> },
  {
    name: 'X server',
    active: true,
    stacked: true,
    art: (
      <svg width="32" height="28" viewBox="0 0 32 28">
        <path d="M29 2L3 26" stroke="#fff" strokeWidth="4" />
        <path d="M29 2L3 26" stroke="#111" strokeWidth="2" />
        <path d="M1 1h8l22 26h-8z" fill="#7a0a86" stroke="#fff" />
      </svg>
    ),
  },
  { name: 'Genesis toolkit', art: <GenesisIcon /> },
  {
    name: 'Wing',
    art: (
      <svg width="29" height="29" viewBox="0 0 29 29">
        <rect width="29" height="29" rx="6" fill="#1690ff" />
        <path d="M8 4Q12 8 19 10Q24 13 22 17L16 25L17 19L13 18L15 17L10 13L13 13Q8 10 8 4Z" fill="#fff" />
      </svg>
    ),
  },
];

function Taskbar() {
  return (
    <footer className="flex h-[39px] shrink-0 items-stretch border-t border-[#5a7290] bg-linear-to-b from-[#16365e] to-[#0a2348] text-white">
      <button aria-label="Start" className="flex w-[60px] items-center pl-2">
        <svg width="38" height="37" viewBox="0 0 38 37">
          <defs>
            <radialGradient id="orb" cx="50%" cy="90%" r="85%">
              <stop offset="0" stopColor="#48d8f8" />
              <stop offset="0.400" stopColor="#14649c" />
              <stop offset="0.700" stopColor="#2a6ea4" />
              <stop offset="1" stopColor="#9fc0d8" />
            </radialGradient>
          </defs>
          <circle cx="19" cy="18.500" r="17.500" fill="url(#orb)" stroke="#0a2a48" />
          <path d="M10 10q4 -2 8 0l-1 8q-4 -2 -8 0z" fill="#e8542a" />
          <path d="M20 11q4 2 9 -1l-2 9q-4 1 -8 -1z" fill="#84c83c" />
          <path d="M9 20q4 -2 8 0l-1 8q-4 -2 -8 0z" fill="#38a8f0" />
          <path d="M19 20q4 3 8 1l-2 8q-4 1 -7 -2z" fill="#ffd23a" />
        </svg>
      </button>
      <div className="flex gap-1 pb-px">
        {TASKS.map((task) => (
          <div key={task.name} className="flex w-[58px]">
            <button
              aria-label={task.name}
              className={`flex grow items-center justify-center rounded-sm border border-[#7d91ab] bg-linear-to-br ${task.active ? 'from-[#d5dde6] to-[#5d7596]' : 'from-[#5b7595] via-[#294a74] via-50% to-[#1b3b66]'}`}
            >
              {task.art}
            </button>
            {task.stacked && (
              <>
                <span className="w-[3px] rounded-r-sm border border-l-0 border-[#7d91ab] bg-[#294a74]" />
                <span className="w-[3px] rounded-r-sm border border-l-0 border-[#7d91ab] bg-[#294a74]" />
              </>
            )}
          </div>
        ))}
      </div>
      <div className="ml-auto flex items-center">
        <svg width="16" height="14" viewBox="0 0 16 14" className="mr-[6px]">
          <path d="M3 3q3 -3 5 -1t5 -1" fill="none" stroke="#aaa" />
          <rect x="0.500" y="5.500" width="15" height="8" rx="1" fill="#c8c8c8" stroke="#777" />
          <path d="M2 8h12M2 10h12M4 12h8" stroke="#444" strokeDasharray="1 1" />
        </svg>
        <span className={`${SANS} mr-[10px] flex h-4 w-4 items-center justify-center rounded-full border border-[#c8d0ff] bg-[#1020a8] text-[12px] leading-3 font-bold`}>?</span>
        <svg width="10" height="18" viewBox="0 0 10 18" className="mr-[10px]">
          <path d="M3 1.500h5v4h-5zM1 3.500h5v3h-5z" fill="none" stroke="#fff" />
          <path d="M2 14h6l-3 3z" fill="#fff" />
        </svg>
        <svg width="8" height="5" viewBox="0 0 8 5" className="mr-[13px]">
          <path d="M0 4.500h8l-4 -4z" fill="#fff" />
        </svg>
        <svg width="16" height="16" viewBox="0 0 16 16" className="mr-2">
          <path d="M1.500 1v14" stroke="#fff" strokeWidth="1.500" />
          <path d="M3 2q4 -1 5 1t5 0v7q-3 1 -5 -1t-5 0z" fill="#fff" />
          <circle cx="11" cy="11" r="4.500" fill="#d82818" />
          <path d="M9 9l4 4M13 9l-4 4" stroke="#fff" strokeWidth="1.500" />
        </svg>
        <svg width="16" height="15" viewBox="0 0 16 15" className="mr-5">
          <path d="M4.500 3.500h11v8h-11zM7 13.500h7M10 11v3" fill="#10284a" stroke="#fff" />
          <path d="M1 1v3h3v-3M2.500 4v7h2" fill="none" stroke="#fff" />
        </svg>
        <div className={`${SANS} mr-3 flex w-[52px] flex-col items-center text-[12px] leading-[18px]`}>
          <span>19:46</span>
          <span>2024/5/7</span>
        </div>
        <button aria-label="Show desktop" className="h-full w-[14px] border border-[#6f86a4] bg-linear-to-b from-[#50698a] to-[#1b3558]" />
      </div>
    </footer>
  );
}

export default function App() {
  return (
    <div className="flex h-screen flex-col overflow-hidden bg-black">
      <TitleBar />
      <MenuBar />
      <div className="flex min-h-0 grow">
        <Sidebar />
        <Workspace />
        <RightPanel />
      </div>
      <CommandBar />
      <div className="h-[33px] shrink-0 border-t-2 border-[#6b9a98] bg-[#c8ffff] p-px">
        <div className="h-[27px] border border-black bg-[#b5ffff] shadow-[inset_-2px_-3px_0_#5f9a9a]" />
      </div>
      <Taskbar />
    </div>
  );
}
